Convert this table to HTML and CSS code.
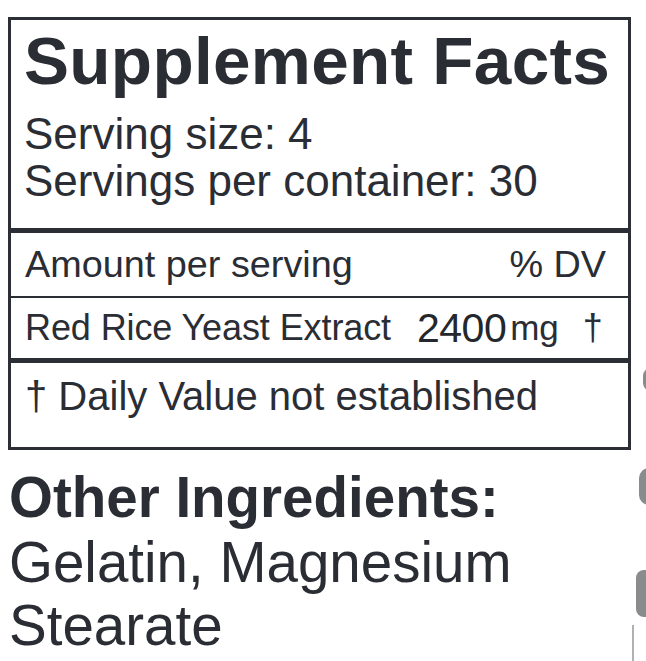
FILE: index.html
```html
<!DOCTYPE html>
<html lang="en">
<head>
<meta charset="utf-8">
<title>Supplement Facts</title>
<link rel="stylesheet" href="styles.css">
</head>
<body>
<div class="page">
  <section class="facts">
    <div class="facts-head">
      <h1 class="facts-title">Supplement Facts</h1>
      <p class="facts-line">Serving size: 4</p>
      <p class="facts-line">Servings per container: 30</p>
    </div>
    <div class="row row-amount thick">
      <span>Amount per serving</span>
      <span>% DV</span>
    </div>
    <div class="row row-item">
      <span class="item-name">Red Rice Yeast Extract</span>
      <span class="item-qty">2400</span>
      <span class="item-unit">mg</span>
      <span class="item-dv">†</span>
    </div>
    <div class="row-note thick">† Daily Value not established</div>
  </section>
  <section class="ingredients">
    <h2 class="ing-title">Other Ingredients:</h2>
    <p class="ing-text">Gelatin, Magnesium<br>Stearate</p>
  </section>
  <div class="edge">
    <span class="edge-blob b1"></span>
    <span class="edge-blob b2"></span>
    <span class="edge-blob b3"></span>
    <span class="edge-line"></span>
  </div>
</div>
</body>
</html>
```

FILE: styles.css
```css
* { box-sizing: border-box; }
html, body { margin: 0; padding: 0; background: #ffffff; }
body {
  font-family: "Liberation Sans", Arial, sans-serif;
  color: #2a2d33;
  width: 646px;
  height: 661px;
  overflow: hidden;
}
.page {
  position: relative;
  width: 646px;
  height: 661px;
  padding-top: 17px;
}
.facts {
  margin-left: 8px;
  width: 623px;
  border: 3px solid #2b2e34;
}
.facts-head {
  padding: 5px 12px 24px 13px;
}
.facts-title {
  margin: 0;
  font-size: 67.5px;
  line-height: 72px;
  font-weight: 700;
  letter-spacing: 0.3px;
}
.facts-line {
  margin: 0;
  font-size: 44px;
  line-height: 47px;
}
.facts-title + .facts-line { margin-top: 13px; }
.row {
  display: flex;
  align-items: center;
  padding: 0 22px 0 14px;
}
.thick { border-top: 5px solid #2b2e34; }
.row-amount {
  height: 70px;
  justify-content: space-between;
  font-size: 37.8px;
  border-bottom: 2px solid #2b2e34;
}
.row-item {
  height: 60px;
  font-size: 36px;
}
.item-name { letter-spacing: -0.1px; }
.item-qty { margin-left: 26px; font-size: 41px; letter-spacing: -0.5px; color: #24272c; }
.item-unit { margin-left: 4px; font-size: 35px; }
.item-dv { margin-left: 24px; }
.row-note {
  height: 89px;
  padding: 11px 14px 0 14px;
  font-size: 40px;
  line-height: 44px;
}
.ingredients {
  margin: 18px 0 0 9px;
}
.ing-title {
  margin: 0;
  font-size: 56.5px;
  line-height: 60px;
  font-weight: 700;
}
.ing-text {
  margin: 3px 0 0 0;
  font-size: 56.5px;
  line-height: 63px;
}
.edge {
  position: absolute;
  top: 0;
  right: 0;
  width: 14px;
  height: 661px;
}
.edge-blob {
  position: absolute;
  background: #8a8b8d;
  border-radius: 10px 0 0 10px;
}
.b1 { left: 11px; top: 368px; width: 8px; height: 23px; }
.b2 { left: 7px; top: 468px; width: 12px; height: 37px; }
.b3 { left: 4px; top: 570px; width: 14px; height: 47px; border-radius: 8px 0 0 8px; }
.edge-line {
  position: absolute;
  left: 0;
  top: 625px;
  width: 2px;
  height: 36px;
  background: #b0b1b3;
}
```
